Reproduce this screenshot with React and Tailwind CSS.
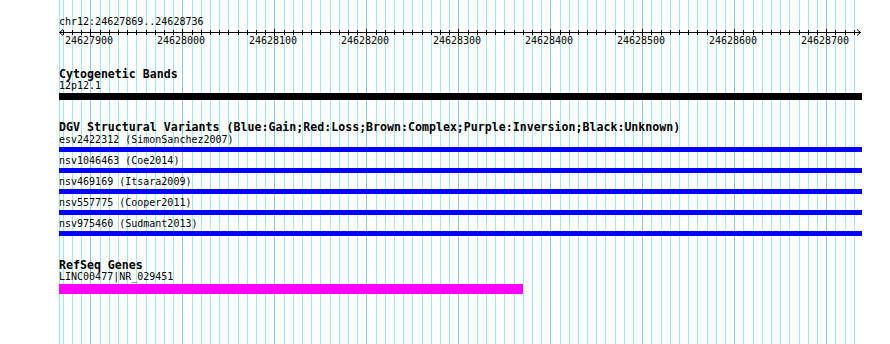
import React from 'react';

// 10 bp per grid step, about 0.92 px per bp
const ticks = [];
for (let k = -3; k <= 83; k++) {
  ticks.push({ x: Math.round(90.3 + k * 9.2), major: k % 10 === 0, bp: 24627900 + k * 10 });
}

const variants = [
  'esv2422312 (SimonSanchez2007)',
  'nsv1046463 (Coe2014)',
  'nsv469169 (Itsara2009)',
  'nsv557775 (Cooper2011)',
  'nsv975460 (Sudmant2013)',
];

const mono = "font-['DejaVu_Sans_Mono',monospace]";
const label = `${mono} text-[10px] leading-[12px] h-[12px] text-black whitespace-nowrap`;
const title = `${mono} font-bold text-[11.6px] leading-[11px] h-[11px] text-black whitespace-nowrap`;

function Grid() {
  return (
    <svg className="absolute inset-0 pointer-events-none" width="890" height="344" shapeRendering="crispEdges">
      <line x1="59.5" y1="0" x2="59.5" y2="344" stroke="#a6e6ee" />
      {ticks.map((t) => (
        <line
          key={t.bp}
          x1={t.x + 0.5}
          y1="0"
          x2={t.x + 0.5}
          y2="344"
          stroke={t.major ? '#8ec4ea' : '#a6e6ee'}
        />
      ))}
    </svg>
  );
}

function Ruler() {
  // viewBox starts at page x=59 so tick coordinates stay in page pixels
  return (
    <svg width="831" height="18" viewBox="59 28 831 18" className="block w-[831px]" shapeRendering="crispEdges">
      <line x1="59" y1="32.5" x2="861" y2="32.5" stroke="#000" />
      <polyline points="63,29.5 59.5,32.5 63,35.5" fill="none" stroke="#000" shapeRendering="auto" />
      <polyline points="857,29.5 860.5,32.5 857,35.5" fill="none" stroke="#000" shapeRendering="auto" />
      {ticks.map((t) => (
        <line
          key={t.bp}
          x1={t.x + 0.5}
          y1={t.major ? 29 : 30}
          x2={t.x + 0.5}
          y2={t.major ? 36 : 35}
          stroke="#000"
        />
      ))}
      {ticks
        .filter((t) => t.major)
        .map((t) => (
          <text
            key={t.bp}
            x={t.x - 1}
            y="43.5"
            textAnchor="middle"
            fontFamily="DejaVu Sans Mono, monospace"
            fontSize="10"
            fill="#000"
          >
            {t.bp}
          </text>
        ))}
    </svg>
  );
}

export default function App() {
  return (
    <div className="relative w-[890px] h-[344px] bg-white overflow-hidden">
      <Grid />
      <div className="relative pl-[59px] w-[862px]">
        <div className={`${label} mt-[16px]`}>chr12:24627869..24628736</div>
        <Ruler />

        <div className={`${title} mt-[23px]`}>Cytogenetic Bands</div>
        <div className={label}>12p12.1</div>
        <div className="mt-[1px] h-[7px] bg-black" />

        <div className={`${title} mt-[22px]`}>
          DGV Structural Variants (Blue:Gain;Red:Loss;Brown:Complex;Purple:Inversion;Black:Unknown)
        </div>
        {variants.map((v, i) => (
          <div key={v} className={i === 0 ? 'mt-[1px]' : 'mt-[3px]'}>
            <div className={label}>{v}</div>
            <div className="mt-[1px] h-[5px] bg-[#0000ff]" />
          </div>
        ))}

        <div className={`${title} mt-[24px]`}>RefSeq Genes</div>
        <div className={label}>LINC00477|NR_029451</div>
        <div className="mt-[1px] h-[10px] w-[464px] bg-[#ff00ff]" />
      </div>
    </div>
  );
}
